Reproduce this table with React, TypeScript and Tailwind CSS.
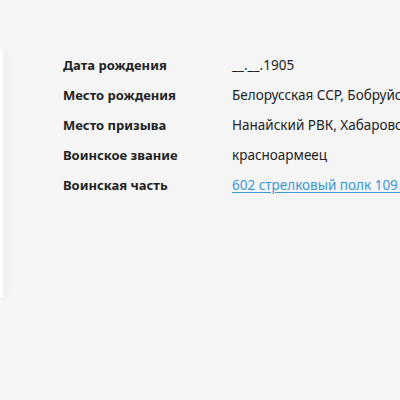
import { type FC } from 'react'

const rows: { label: string; value: string; link?: boolean }[] = [
  { label: 'Дата рождения', value: '__.__.1905' },
  { label: 'Место рождения', value: 'Белорусская ССР, Бобруйский р-н' },
  { label: 'Место призыва', value: 'Нанайский РВК, Хабаровский край' },
  { label: 'Воинское звание', value: 'красноармеец' },
  { label: 'Воинская часть', value: '602 стрелковый полк 109 стрелковой дивизии', link: true },
]

const App: FC = () => {
  return (
    <div className="h-[400px] w-[400px] overflow-hidden bg-[#f5f5f5] flex items-start pt-[50px] font-['Noto_Sans',sans-serif] text-[13.5px] text-[#222]">
      <div className="w-[3px] h-[247px] shrink-0 bg-white shadow-[0_0_12px_rgba(0,0,0,0.08)]" />
      <dl className="ml-[60px] grid grid-cols-[169px_max-content] leading-[30px] whitespace-nowrap">
        {rows.map((row) => (
          <div key={row.label} className="contents">
            <dt className="font-bold text-[13px]">{row.label}</dt>
            <dd>
              {row.link ? (
                <a href="#" className="text-[#3a98d8] underline underline-offset-2">
                  {row.value}
                </a>
              ) : (
                row.value
              )}
            </dd>
          </div>
        ))}
      </dl>
    </div>
  )
}

export default App
